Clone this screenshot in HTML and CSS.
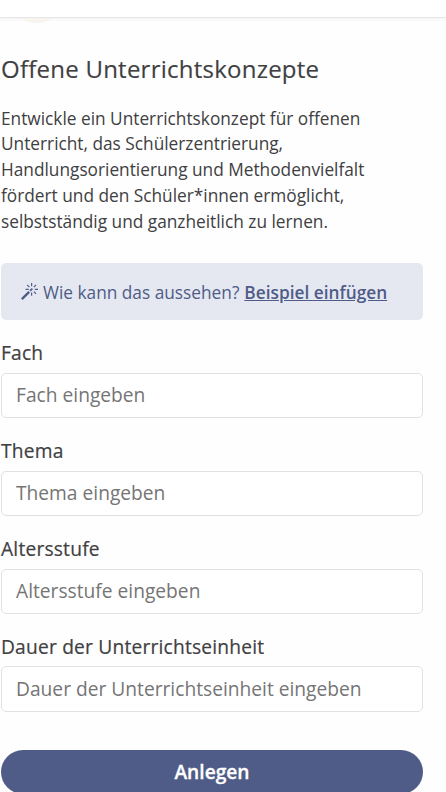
FILE: index.html
```html
<!DOCTYPE html>
<html lang="de">
<head>
    <meta charset="UTF-8">
    <title>Offene Unterrichtskonzepte</title>
    <link rel="stylesheet" href="styles.css">
</head>
<body>
    <header class="topbar"></header>
    <div class="circle-wrap">
        <div class="circle"></div>
    </div>

    <main class="container">
        <h1>Offene Unterrichtskonzepte</h1>
        <p class="description">Entwickle ein Unterrichtskonzept für offenen<br>
            Unterricht, das Schülerzentrierung,<br>
            Handlungsorientierung und Methodenvielfalt<br>
            fördert und den Schüler*innen ermöglicht,<br>
            selbstständig und ganzheitlich zu lernen.</p>

        <div class="hint">
            <svg class="wand" viewBox="0 0 16 16" fill="none" stroke="currentColor">
                <path d="M.8 15.2L7.7 8.3" stroke-width="2.2"/>
                <path d="M8.5 7.5L10.7 5.3" stroke-width="1.6"/>
                <path d="M10 0v3M10 9v3M4.3 6h3M13 6h3M5.8 1.8L7.9 3.9M14.2 1.8L12.1 3.9M14.2 10.2L12.1 8.1" stroke-width="1.1"/>
            </svg>
            <span class="hint-text">Wie kann das aussehen?</span>
            <a href="#">Beispiel einfügen</a>
        </div>

        <form>
            <div class="field">
                <label for="fach">Fach</label>
                <input type="text" id="fach" placeholder="Fach eingeben">
            </div>
            <div class="field">
                <label for="thema">Thema</label>
                <input type="text" id="thema" placeholder="Thema eingeben">
            </div>
            <div class="field">
                <label for="altersstufe">Altersstufe</label>
                <input type="text" id="altersstufe" placeholder="Altersstufe eingeben">
            </div>
            <div class="field field-last">
                <label for="dauer">Dauer der Unterrichtseinheit</label>
                <input type="text" id="dauer" placeholder="Dauer der Unterrichtseinheit eingeben">
            </div>
            <button type="button">Anlegen</button>
        </form>
    </main>
</body>
</html>
```
FILE: styles.css
```css
* {
    box-sizing: border-box;
}
body {
    margin: 0;
    height: 792px;
    overflow: hidden;
    background: #fefefe;
    font-family: 'Open Sans', sans-serif;
    color: #404042;
}
.topbar {
    height: 18px;
    background: #fff;
    border-bottom: 1px solid #e6e6e8;
    box-shadow: 0 1px 4px rgba(0, 0, 0, 0.06);
}
.circle-wrap {
    height: 35px;
    overflow: hidden;
}
.circle {
    width: 60px;
    height: 60px;
    margin: -55px 0 0 7px;
    border-radius: 50%;
    background: #f8f4ee;
}
.container {
    width: 422px;
    margin-left: 1px;
}
h1 {
    margin: 0 0 21px;
    font-size: 24px;
    line-height: 31px;
    font-weight: 500;
    letter-spacing: 0.24px;
    -webkit-text-stroke: 0.15px;
}
.description {
    margin: 0;
    height: 158px;
    padding-top: 0.6px;
    font-size: 17.28px;
    line-height: 25.8px;
}
.hint {
    display: flex;
    align-items: center;
    height: 57px;
    padding: 1px 0 0 20px;
    background: #e5e8f1;
    border-radius: 5px;
    color: #4f5c87;
    font-size: 17.28px;
}
.wand {
    width: 17px;
    height: 17px;
    margin: -1px 5px 0 0;
}
.hint a {
    margin-left: 5px;
    color: #4f5c87;
    font-weight: 600;
}
form {
    padding-top: 20px;
}
.field {
    height: 98px;
}
label {
    display: block;
    height: 33px;
    font-size: 19.2px;
    line-height: 26px;
    font-weight: 500;
    letter-spacing: 0.2px;
    -webkit-text-stroke: 0.2px;
}
input {
    display: block;
    width: 100%;
    height: 45px;
    padding: 0 14px 2px;
    border: 1px solid #dfe1e5;
    border-radius: 5px;
    background: #fff;
    font-family: inherit;
    font-size: 19.2px;
}
input::placeholder {
    color: #757575;
}
.field-last label {
    height: 32px;
}
.field-last input {
    height: 46px;
}
button {
    display: block;
    width: 100%;
    height: 44px;
    margin-top: 18px;
    padding: 0 0 2px;
    border: none;
    border-radius: 22px;
    background: #4f5c87;
    color: #fff;
    font-family: inherit;
    font-size: 19.2px;
    font-weight: 600;
    -webkit-text-stroke: 0.3px;
}
```
